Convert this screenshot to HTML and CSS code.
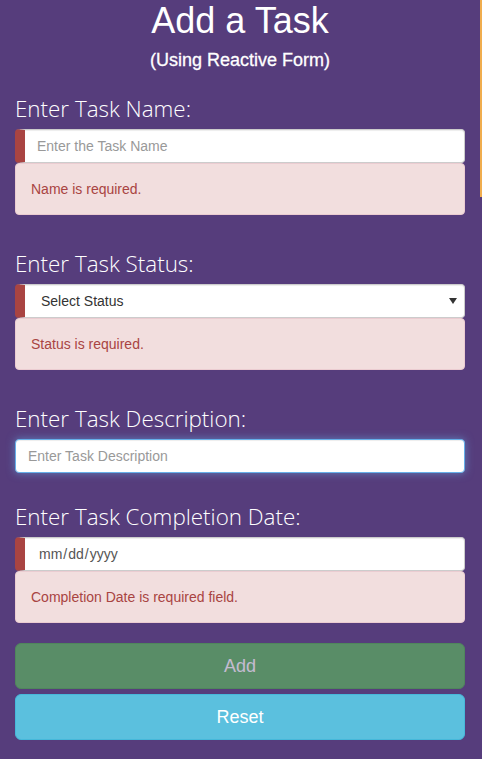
FILE: index.html
```html
<!DOCTYPE html>
<html lang="en">
<head>
<meta charset="utf-8">
<title>Add a Task</title>
<link rel="stylesheet" href="styles.css">
</head>
<body>
<div class="panel">
  <span class="edge-stripe"></span>
  <h1 class="title">Add a Task</h1>
  <h4 class="subtitle">(Using Reactive Form)</h4>
  <form class="task-form">
    <div class="group">
      <label class="field-label" for="taskName">Enter Task Name:</label>
      <input id="taskName" class="control invalid" type="text" placeholder="Enter the Task Name">
      <div class="alert">Name is required.</div>
    </div>
    <div class="group">
      <label class="field-label" for="taskStatus">Enter Task Status:</label>
      <div class="select-wrap">
        <select id="taskStatus" class="control invalid select">
          <option>Select Status</option>
          <option>Pending</option>
          <option>Completed</option>
        </select>
        <svg class="select-arrow" width="8" height="6" viewBox="0 0 8 6"><path d="M0 0H8L4 6Z" fill="#333"/></svg>
      </div>
      <div class="alert">Status is required.</div>
    </div>
    <div class="group group-plain">
      <label class="field-label" for="taskDesc">Enter Task Description:</label>
      <input id="taskDesc" class="control focused" type="text" placeholder="Enter Task Description">
    </div>
    <div class="group">
      <label class="field-label" for="taskDate">Enter Task Completion Date:</label>
      <input id="taskDate" class="control invalid date" type="date">
      <div class="alert">Completion Date is required field.</div>
    </div>
    <div class="actions">
      <button type="submit" class="btn btn-add" disabled>Add</button>
      <button type="reset" class="btn btn-reset">Reset</button>
    </div>
  </form>
</div>
</body>
</html>
```
FILE: styles.css
```css
* { box-sizing: border-box; }
html, body { margin: 0; padding: 0; background: #fff; }
body { font-family: "Liberation Sans", Arial, sans-serif; font-size: 14px; color: #333; }

.panel {
  position: relative;
  background: #563d7c;
  padding: 0 17px 19px 15px;
  color: #fff;
}
.edge-stripe {
  position: absolute;
  top: 0;
  right: 0;
  width: 2px;
  height: 197px;
  background: #f0ad4e;
}

.title {
  margin: 0;
  padding-top: 1px;
  font-size: 36px;
  line-height: 40px;
  font-weight: normal;
  text-align: center;
}
.subtitle {
  margin: 9px 0 0;
  font-size: 18px;
  line-height: 20px;
  font-weight: normal;
  text-align: center;
  -webkit-text-stroke: 0.3px #fff;
}

.task-form { display: flex; flex-direction: column; margin-top: 24px; }
.group { display: flex; flex-direction: column; margin-bottom: 34px; }
.group-plain { margin-bottom: 29px; }
.group .alert { margin: 0; }

.field-label {
  font-family: "Open Sans", "Liberation Sans", sans-serif;
  font-weight: 300;
  font-size: 22.4px;
  line-height: 30px;
  margin: 0 0 5px;
  color: #fff;
}

.control {
  display: block;
  width: 100%;
  height: 34px;
  padding: 6px 12px;
  font-family: "Liberation Sans", Arial, sans-serif;
  font-size: 14px;
  line-height: 20px;
  color: #555;
  background: #fff;
  border: 1px solid #ccc;
  border-radius: 4px;
  box-shadow: inset 0 1px 1px rgba(0,0,0,.075);
  outline: none;
}
.control::placeholder { color: #999; }
.control.invalid { border-left: 10px solid #a94442; }
.control.focused {
  border-color: #66afe9;
  box-shadow: inset 0 1px 1px rgba(0,0,0,.075), 0 0 8px rgba(102,175,233,.6);
}

.select-wrap { position: relative; }
.select {
  -webkit-appearance: none;
  appearance: none;
  color: #333;
  padding-left: 16px;
}
.select-arrow { position: absolute; right: 8px; top: 14px; }

.date::-webkit-calendar-picker-indicator { display: none; }
.date::-webkit-inner-spin-button { display: none; }
.date { padding-left: 13px; }

.alert {
  padding: 15px;
  background: #f2dede;
  border: 1px solid #ebccd1;
  border-radius: 4px;
  color: #a94442;
  font-size: 14px;
  line-height: 20px;
}

.actions { display: flex; flex-direction: column; gap: 5px; margin-top: -14px; }
.btn {
  display: block;
  width: 100%;
  height: 46px;
  padding: 10px 16px;
  font-family: "Liberation Sans", Arial, sans-serif;
  font-size: 18px;
  line-height: 24px;
  border-radius: 6px;
  border: 1px solid transparent;
  color: #fff;
  text-align: center;
}
.btn-add {
  background: #5cb85c;
  border-color: #4cae4c;
  opacity: .65;
}
.btn-reset {
  background: #5bc0de;
  border-color: #46b8da;
}
```
